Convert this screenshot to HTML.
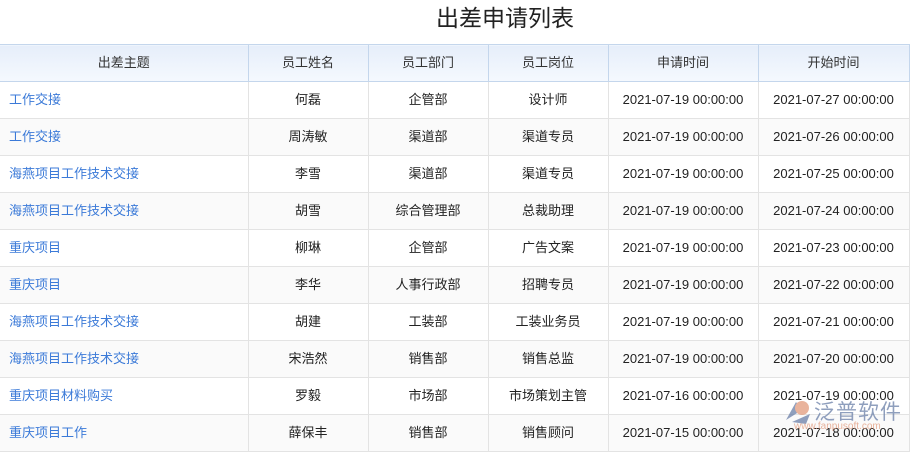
<!DOCTYPE html>
<html><head><meta charset="utf-8"><style>
body{margin:0;width:910px;height:441px;overflow:hidden;background:#fff;font-family:"Liberation Sans","Noto Sans CJK SC",sans-serif;}
h1{margin:0;height:44px;line-height:36px;font-size:23px;font-weight:normal;color:#222;text-align:center;padding-left:100px;}
table{border-collapse:collapse;table-layout:fixed;width:909px;position:absolute;top:44px;left:0;}
th{height:36px;padding:0;line-height:16px;font-weight:normal;font-size:13px;color:#333;background:linear-gradient(#e6eefa,#f5f9fe);border:1px solid #c4d6ec;}
td{height:36px;line-height:16px;font-size:13px;color:#222;text-align:center;border:1px solid #e3e3e3;padding:0;}
td.l{text-align:left;padding-left:9px;color:#3b7ad8;}
tr:nth-child(odd) td{background:#fafafa;}
th:first-child,td:first-child{border-left:none;}
</style></head><body>
<h1>出差申请列表</h1>
<table>
<colgroup><col style="width:248px"><col style="width:120px"><col style="width:120px"><col style="width:120px"><col style="width:150px"><col style="width:151px"></colgroup>
<tr><th>出差主题</th><th>员工姓名</th><th>员工部门</th><th>员工岗位</th><th>申请时间</th><th>开始时间</th></tr>
<tr><td class="l">工作交接</td><td>何磊</td><td>企管部</td><td>设计师</td><td>2021-07-19 00:00:00</td><td>2021-07-27 00:00:00</td></tr>
<tr><td class="l">工作交接</td><td>周涛敏</td><td>渠道部</td><td>渠道专员</td><td>2021-07-19 00:00:00</td><td>2021-07-26 00:00:00</td></tr>
<tr><td class="l">海燕项目工作技术交接</td><td>李雪</td><td>渠道部</td><td>渠道专员</td><td>2021-07-19 00:00:00</td><td>2021-07-25 00:00:00</td></tr>
<tr><td class="l">海燕项目工作技术交接</td><td>胡雪</td><td>综合管理部</td><td>总裁助理</td><td>2021-07-19 00:00:00</td><td>2021-07-24 00:00:00</td></tr>
<tr><td class="l">重庆项目</td><td>柳琳</td><td>企管部</td><td>广告文案</td><td>2021-07-19 00:00:00</td><td>2021-07-23 00:00:00</td></tr>
<tr><td class="l">重庆项目</td><td>李华</td><td>人事行政部</td><td>招聘专员</td><td>2021-07-19 00:00:00</td><td>2021-07-22 00:00:00</td></tr>
<tr><td class="l">海燕项目工作技术交接</td><td>胡建</td><td>工装部</td><td>工装业务员</td><td>2021-07-19 00:00:00</td><td>2021-07-21 00:00:00</td></tr>
<tr><td class="l">海燕项目工作技术交接</td><td>宋浩然</td><td>销售部</td><td>销售总监</td><td>2021-07-19 00:00:00</td><td>2021-07-20 00:00:00</td></tr>
<tr><td class="l">重庆项目材料购买</td><td>罗毅</td><td>市场部</td><td>市场策划主管</td><td>2021-07-16 00:00:00</td><td>2021-07-19 00:00:00</td></tr>
<tr><td class="l">重庆项目工作</td><td>薛保丰</td><td>销售部</td><td>销售顾问</td><td>2021-07-15 00:00:00</td><td>2021-07-18 00:00:00</td></tr>
</table>
<div style="position:absolute;left:780px;top:394px;width:126px;height:40px;opacity:.75">
<svg width="32" height="30" style="position:absolute;left:2px;top:2px"><path d="M4 24 L14 6 L20 14 Z" fill="#6a7fa8"/><circle cx="20" cy="12" r="7" fill="#e29a7c"/><path d="M10 26 L28 18 L24 28 Z" fill="#6a7fa8"/></svg>
<span style="position:absolute;left:34px;top:2px;font-size:21px;color:#6a7fa8;letter-spacing:1px">泛普软件</span>
<span style="position:absolute;left:14px;top:27px;font-size:10px;color:#e29a7c">www.fanpusoft.com</span>
</div>
</body></html>
